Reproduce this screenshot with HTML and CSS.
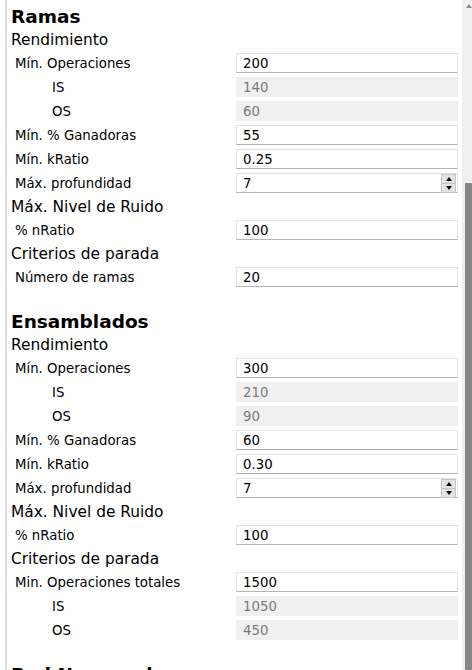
FILE: index.html
```html
<!DOCTYPE html>
<html lang="es">
<head>
  <meta charset="UTF-8">
  <title>Parámetros</title>
  <link rel="stylesheet" href="styles.css">
</head>
<body>

  <div class="panel">

    <div class="section">
      <h2>Ramas</h2>
      <h3>Rendimiento</h3>
      <div class="row"><span class="label">Mín. Operaciones</span><div class="field"><span class="value">200</span></div></div>
      <div class="row"><span class="label sub">IS</span><div class="field disabled"><span class="value">140</span></div></div>
      <div class="row"><span class="label sub">OS</span><div class="field disabled"><span class="value">60</span></div></div>
      <div class="row"><span class="label">Mín. % Ganadoras</span><div class="field"><span class="value">55</span></div></div>
      <div class="row"><span class="label">Mín. kRatio</span><div class="field"><span class="value">0.25</span></div></div>
      <div class="row"><span class="label">Máx. profundidad</span><div class="field"><span class="value">7</span><div class="spin"><span class="btn up"></span><span class="btn down"></span></div></div></div>
      <h3>Máx. Nivel de Ruido</h3>
      <div class="row"><span class="label">% nRatio</span><div class="field"><span class="value">100</span></div></div>
      <h3>Criterios de parada</h3>
      <div class="row"><span class="label">Número de ramas</span><div class="field"><span class="value">20</span></div></div>
    </div>

    <div class="section">
      <h2>Ensamblados</h2>
      <h3>Rendimiento</h3>
      <div class="row"><span class="label">Mín. Operaciones</span><div class="field"><span class="value">300</span></div></div>
      <div class="row"><span class="label sub">IS</span><div class="field disabled"><span class="value">210</span></div></div>
      <div class="row"><span class="label sub">OS</span><div class="field disabled"><span class="value">90</span></div></div>
      <div class="row"><span class="label">Mín. % Ganadoras</span><div class="field"><span class="value">60</span></div></div>
      <div class="row"><span class="label">Mín. kRatio</span><div class="field"><span class="value">0.30</span></div></div>
      <div class="row"><span class="label">Máx. profundidad</span><div class="field"><span class="value">7</span><div class="spin"><span class="btn up"></span><span class="btn down"></span></div></div></div>
      <h3>Máx. Nivel de Ruido</h3>
      <div class="row"><span class="label">% nRatio</span><div class="field"><span class="value">100</span></div></div>
      <h3>Criterios de parada</h3>
      <div class="row"><span class="label">Min. Operaciones totales</span><div class="field"><span class="value">1500</span></div></div>
      <div class="row"><span class="label sub">IS</span><div class="field disabled"><span class="value">1050</span></div></div>
      <div class="row"><span class="label sub">OS</span><div class="field disabled"><span class="value">450</span></div></div>
    </div>

    <div class="section">
      <h2>Red Neuronal</h2>
      <h3>Rendimiento</h3>
    </div>

  </div>

  <div class="scrollbar">
    <span class="arrow"></span>
    <div class="thumb"></div>
  </div>

</body>
</html>
```

FILE: styles.css
```css
html, body {
  height: 670px;
  overflow: hidden;
}

body {
  margin: 0;
  display: flex;
  background: #fff;
  color: #000;
  font-family: 'DejaVu Sans', Verdana, sans-serif;
}

.panel {
  flex: 1;
  margin-left: 5px;
  border-left: 2px solid #dcdcdc;
  padding: 4px 4px 0 4px;
}

.section {
  margin-bottom: 19px;
}

h2 {
  margin: 0;
  height: 25px;
  line-height: 25px;
  font-size: 18.5px;
  font-weight: bold;
}

h3 {
  margin: 0;
  height: 23px;
  line-height: 23px;
  font-size: 15.4px;
  font-weight: normal;
}

.row {
  display: grid;
  grid-template-columns: 1fr 222px;
  align-items: center;
  height: 20px;
  padding: 1px 0 3px;
}

.label {
  font-size: 13.3px;
  padding-left: 4px;
  white-space: nowrap;
}

.label.sub {
  padding-left: 41px;
}

.field {
  box-sizing: border-box;
  height: 20px;
  display: flex;
  align-items: center;
  background: #fff;
  border: 1px solid #e4e4e4;
  border-bottom-color: #b4b4b4;
  padding-left: 6px;
  font-size: 13.3px;
}

.field .value {
  flex: 1;
}

.field.disabled {
  background: #f0f0f0;
  border-color: #f0f0f0;
  color: #7a7a7a;
}

.spin {
  display: flex;
  flex-direction: column;
  width: 15px;
  height: 19px;
  margin-right: 1px;
  margin-top: 1px;
}

.btn {
  flex: 1;
  display: flex;
  align-items: center;
  justify-content: center;
  background: #e4e4e4;
  border: 1px solid #c6c6c6;
  box-sizing: border-box;
}

.btn + .btn {
  border-top: none;
}

.btn::after {
  content: '';
  border-left: 3.5px solid transparent;
  border-right: 3.5px solid transparent;
}

.btn.up::after {
  border-bottom: 4px solid #000;
}

.btn.down::after {
  border-top: 4px solid #000;
}

.scrollbar {
  width: 10px;
  background: #f0f0f0;
  display: flex;
  flex-direction: column;
  align-items: center;
}

.arrow {
  margin-top: 4px;
  margin-left: 3px;
  border-left: 3px solid transparent;
  border-right: 3px solid transparent;
  border-bottom: 4px solid #8a8a8a;
}

.thumb {
  margin-top: 175px;
  margin-left: 3px;
  width: 7px;
  flex: 1;
  background: #878787;
  border-radius: 1px;
}
```
